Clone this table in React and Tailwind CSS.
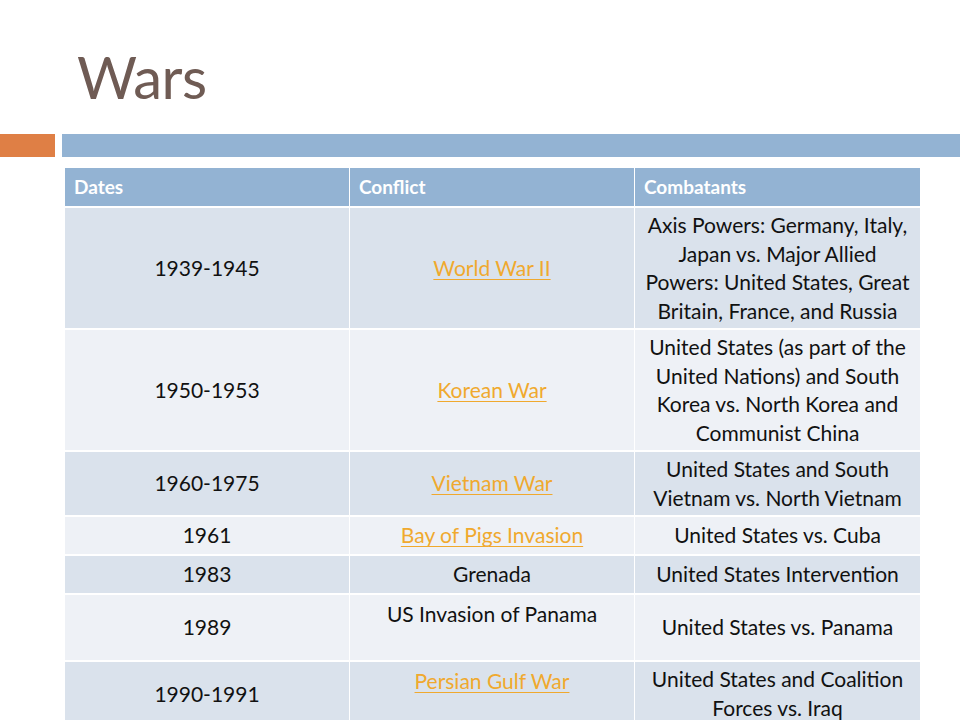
import React from "react";

const L = ({ children }) => (
  <span className="text-[#f0a92e] underline decoration-1 underline-offset-[3px]">{children}</span>
);

const rows = [
  {
    bg: "bg-[#dae2ec]",
    d: "1939-1945",
    c: <L>World War II</L>,
    b: ["Axis Powers: Germany, Italy,", "Japan vs. Major Allied", "Powers: United States, Great", "Britain, France, and Russia"],
  },
  {
    bg: "bg-[#eef1f6]",
    d: "1950-1953",
    c: <L>Korean War</L>,
    b: ["United States (as part of the", "United Nations) and South", "Korea vs. North Korea and", "Communist China"],
  },
  {
    bg: "bg-[#dae2ec]",
    d: "1960-1975",
    c: <L>Vietnam War</L>,
    b: ["United States and South", "Vietnam vs. North Vietnam"],
  },
  { bg: "bg-[#eef1f6]", d: "1961", c: <L>Bay of Pigs Invasion</L>, b: ["United States vs. Cuba"] },
  { bg: "bg-[#dae2ec]", d: "1983", c: "Grenada", b: ["United States Intervention"] },
  { bg: "bg-[#eef1f6]", d: "1989", c: "US Invasion of Panama", top: true, b: ["United States vs. Panama"] },
  {
    bg: "bg-[#dae2ec]",
    d: "1990-1991",
    c: <L>Persian Gulf War</L>,
    top: true,
    b: ["United States and Coalition", "Forces vs. Iraq"],
  },
];

export default function App() {
  return (
    <div
      className="w-[960px] h-[720px] bg-white overflow-hidden relative"
      style={{ fontFamily: "Lato, 'Noto Sans', sans-serif" }}
    >
      <div className="pl-[77px] pt-[42px] h-[134px]">
        <h1 className="text-[58px] leading-[70px] tracking-[-0.5px] text-[#6f5b54] font-normal">Wars</h1>
      </div>
      <div className="flex h-[23px] gap-[7px]">
        <div className="w-[55px] bg-[#df7f45]" />
        <div className="flex-1 bg-[#93b3d3]" />
      </div>
      <div className="pl-[65px] pt-[11px]">
        <div className="grid grid-cols-[284px_284px_285px] gap-x-[1px] gap-y-[2px] text-[21px] leading-[28.5px] text-[#111]">
          {["Dates", "Conflict", "Combatants"].map((h) => (
            <div
              key={h}
              className="h-[38px] bg-[#93b3d3] text-white font-bold text-[19px] flex items-center px-[9px]"
            >
              {h}
            </div>
          ))}
          {rows.map((r, i) => (
            <React.Fragment key={i}>
              <div className={`${r.bg} min-h-[37px] flex items-center justify-center py-[3px] px-[6px]`}>{r.d}</div>
              <div
                className={`${r.bg} flex flex-col ${r.top ? "justify-start pt-[5px]" : "justify-center py-[3px]"} items-center px-[6px]`}
              >
                <div className="whitespace-nowrap">{r.c}</div>
                {r.top && <div className="h-[31px]" />}
              </div>
              <div className={`${r.bg} flex flex-col items-center justify-center py-[3px] px-[2px] text-center`}>
                {r.b.map((t, j) => (
                  <div key={j} className="whitespace-nowrap">
                    {t}
                  </div>
                ))}
              </div>
            </React.Fragment>
          ))}
        </div>
      </div>
    </div>
  );
}
